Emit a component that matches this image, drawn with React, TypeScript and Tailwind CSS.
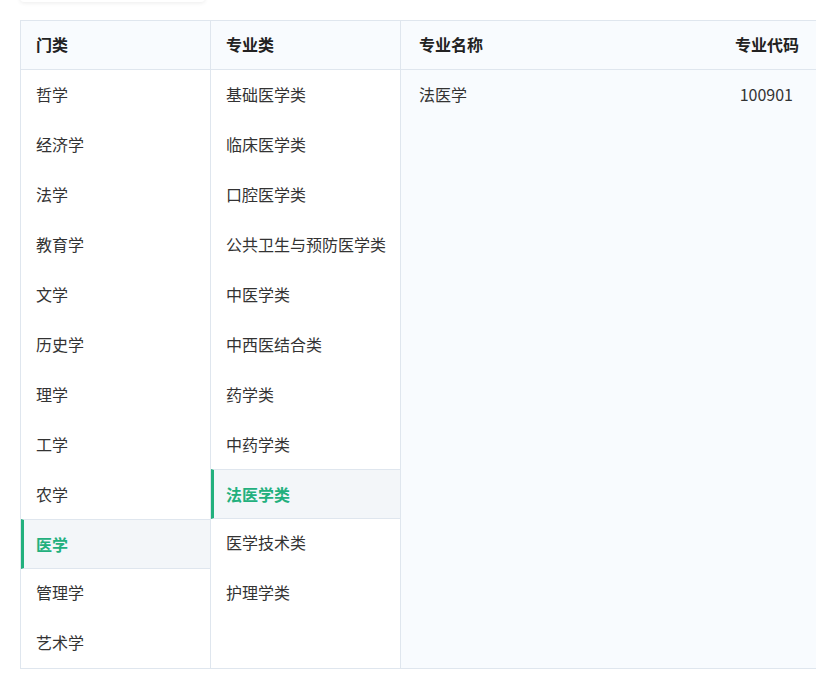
const c1 = ["哲学","经济学","法学","教育学","文学","历史学","理学","工学","农学","医学","管理学","艺术学"];
const c2 = ["基础医学类","临床医学类","口腔医学类","公共卫生与预防医学类","中医学类","中西医结合类","药学类","中药学类","法医学类","医学技术类","护理学类"];

function Item({ t, active }: { t: string; active: boolean }) {
  return active ? (
    <div className="h-[50px] flex items-center pl-[12px] pb-[1px] border-l-[3px] border-[#22b07d] border-y border-y-[#dfe6ee] bg-[#f3f6f9] text-[#22b07d] font-bold -my-px">{t}</div>
  ) : (
    <div className="h-[50px] flex items-center pl-[15px] pb-[3px] text-[#333]">{t}</div>
  );
}

export default function App() {
  return (
    <div className="w-[816px] h-[677px] bg-white overflow-hidden relative text-[16px]" style={{ fontFamily: '"Noto Sans CJK SC", "Noto Sans", sans-serif' }}>
      <div className="absolute left-[20px] top-[-10px] w-[185px] h-[12px] bg-white shadow-[0_1px_4px_rgba(0,0,0,0.08)] rounded" />
      <div className="absolute left-[20px] top-[20px] w-[820px] h-[649px] border border-[#dfe6ee] flex">
        <div className="w-[190px] border-r border-[#dfe6ee] flex flex-col">
          <div className="h-[49px] pb-[2px] border-b border-[#dfe6ee] bg-[#f8fbfe] flex items-center pl-[15px] font-bold text-[#222]">门类</div>
          {c1.map(t => <Item key={t} t={t} active={t === "医学"} />)}
        </div>
        <div className="w-[190px] border-r border-[#dfe6ee] flex flex-col">
          <div className="h-[49px] pb-[2px] border-b border-[#dfe6ee] bg-[#f8fbfe] flex items-center pl-[15px] font-bold text-[#222]">专业类</div>
          {c2.map(t => <Item key={t} t={t} active={t === "法医学类"} />)}
        </div>
        <div className="flex-1 bg-[#f8fbfe] flex flex-col">
          <div className="h-[49px] pb-[2px] border-b border-[#dfe6ee] flex items-center justify-between pl-[18px] pr-[40px] font-bold text-[#222]">
            <span>专业名称</span><span>专业代码</span>
          </div>
          <div className="h-[50px] pb-[3px] flex items-center justify-between pl-[18px] pr-[46px] text-[#333]">
            <span>法医学</span><span>100901</span>
          </div>
        </div>
      </div>
    </div>
  );
}
